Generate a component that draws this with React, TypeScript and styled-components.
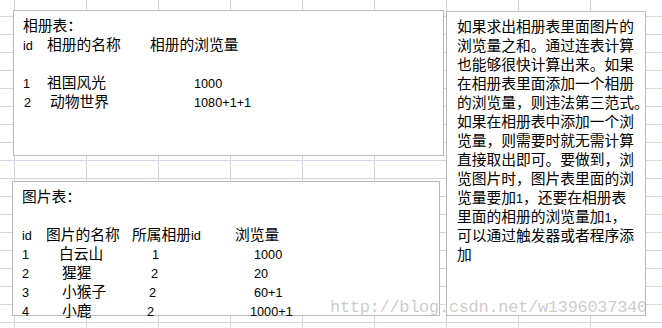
import React from "react";
import styled, { createGlobalStyle } from "styled-components";

const GlobalStyle = createGlobalStyle`
  html, body {
    margin: 0;
    height: 100%;
  }
  body {
    background-color: #ffffff;
    background-image:
      linear-gradient(to right, #d0d7e5 1px, transparent 1px),
      linear-gradient(to bottom, #d0d7e5 1px, transparent 1px);
    background-size: 72px 18px;
    background-position: 14px 16px;
    font-family: "Noto Sans CJK SC", "Noto Sans", sans-serif;
    color: #000;
    overflow: hidden;
  }
`;

const Sheet = styled.div`
  position: relative;
  display: flex;
  align-items: flex-start;
  padding: 10px 0 0 13px;
  height: 328px;
  box-sizing: border-box;
`;

const LeftColumn = styled.div`
  display: flex;
  flex-direction: column;
  gap: 25px;
`;

const TextBox = styled.div<{ w: number; h: number; shift?: number }>`
  box-sizing: border-box;
  width: ${(p) => p.w}px;
  height: ${(p) => p.h}px;
  margin-left: ${(p) => p.shift || 0}px;
  background: #fff;
  border: 1px solid #bababa;
  padding: 4px 9px;
  font-size: 14.75px;
`;

const NoteBox = styled(TextBox)`
  margin-left: 2px;
  margin-top: 1px;
  padding: 4px 10px;
`;

const Line = styled.div`
  height: 19px;
  line-height: 19px;
  white-space: nowrap;
`;

const Row = styled.div<{ cols: string }>`
  display: grid;
  grid-template-columns: ${(p) => p.cols};
  align-items: baseline;
  height: 19px;
  line-height: 19px;
  white-space: nowrap;
`;

const Cell = styled.span<{ indent?: number }>`
  padding-left: ${(p) => p.indent || 0}px;
`;

const Latin = styled.span`
  font-family: "Liberation Sans", Arial, sans-serif;
  font-size: 12.7px;
`;

const Watermark = styled.div`
  position: absolute;
  left: 330px;
  top: 299px;
  font-family: "Liberation Mono", "Courier New", monospace;
  font-size: 17px;
  letter-spacing: -0.3px;
  line-height: 17px;
  color: rgba(170, 170, 170, 0.6);
  white-space: nowrap;
  pointer-events: none;
`;

const albums = [
  { id: "1", idIndent: 0, name: "祖国风光", nameIndent: 0, views: "1000" },
  { id: "2", idIndent: 1, name: "动物世界", nameIndent: 3, views: "1080+1+1" },
];

const pictures = [
  { id: "1", name: "白云山", nameIndent: 13, album: "1", albumIndent: 20, views: "1000", viewsIndent: 19 },
  { id: "2", name: "猩猩", nameIndent: 16, album: "2", albumIndent: 19, views: "20", viewsIndent: 19 },
  { id: "3", name: "小猴子", nameIndent: 16, album: "2", albumIndent: 17, views: "60+1", viewsIndent: 19 },
  { id: "4", name: "小鹿", nameIndent: 16, album: "2", albumIndent: 15, views: "1000+1", viewsIndent: 15 },
];

const note: React.ReactNode[] = [
  "如果求出相册表里面图片的",
  "浏览量之和。通过连表计算",
  "也能够很快计算出来。如果",
  "在相册表里面添加一个相册",
  "的浏览量，则违法第三范式。",
  "如果在相册表中添加一个浏",
  "览量，则需要时就无需计算",
  "直接取出即可。要做到，浏",
  "览图片时，图片表里面的浏",
  <>览量要加<Latin>1</Latin>，还要在相册表</>,
  <>里面的相册的浏览量加<Latin>1</Latin>，</>,
  "可以通过触发器或者程序添",
  "加",
];

export default function App() {
  return (
    <>
      <GlobalStyle />
      <Sheet>
        <LeftColumn>
          <TextBox w={431} h={146}>
            <Line>相册表：</Line>
            <Row cols="24px 103px 1fr">
              <Cell>
                <Latin>id</Latin>
              </Cell>
              <Cell>相册的名称</Cell>
              <Cell>相册的浏览量</Cell>
            </Row>
            <Line />
            {albums.map((a) => (
              <Row key={a.id} cols="24px 103px 1fr">
                <Cell indent={a.idIndent}>
                  <Latin>{a.id}</Latin>
                </Cell>
                <Cell indent={a.nameIndent}>{a.name}</Cell>
                <Cell indent={44}>
                  <Latin>{a.views}</Latin>
                </Cell>
              </Row>
            ))}
          </TextBox>
          <TextBox w={428} h={135} shift={-1}>
            <Line>图片表：</Line>
            <Line />
            <Row cols="24px 86px 103px 1fr">
              <Cell>
                <Latin>id</Latin>
              </Cell>
              <Cell>图片的名称</Cell>
              <Cell>
                所属相册<Latin>id</Latin>
              </Cell>
              <Cell>浏览量</Cell>
            </Row>
            {pictures.map((p) => (
              <Row key={p.id} cols="24px 86px 103px 1fr">
                <Cell>
                  <Latin>{p.id}</Latin>
                </Cell>
                <Cell indent={p.nameIndent}>{p.name}</Cell>
                <Cell indent={p.albumIndent}>
                  <Latin>{p.album}</Latin>
                </Cell>
                <Cell indent={p.viewsIndent}>
                  <Latin>{p.views}</Latin>
                </Cell>
              </Row>
            ))}
          </TextBox>
        </LeftColumn>
        <NoteBox w={200} h={305}>
          {note.map((l, i) => (
            <Line key={i}>{l}</Line>
          ))}
        </NoteBox>
        <Watermark>http://blog.csdn.net/w1396037340</Watermark>
      </Sheet>
    </>
  );
}
